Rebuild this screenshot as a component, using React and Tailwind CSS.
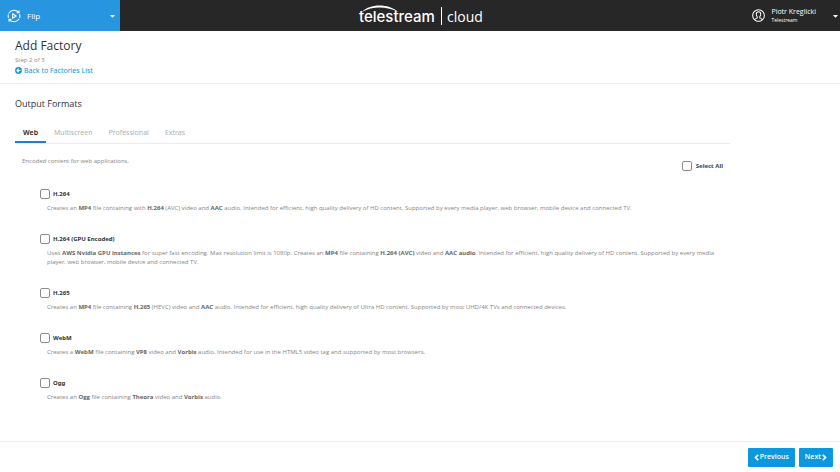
import { useState } from 'react';
import { FaCaretDown } from 'react-icons/fa';

const TABS = ['Web', 'Multiscreen', 'Professional', 'Extras'];

const FORMATS = [
  {
    id: 'h264',
    label: 'H.264',
    text: <>Creates an <b>MP4</b> file containing with <b>H.264</b> (AVC) video and <b>AAC</b> audio. Intended for efficient, high quality delivery of HD content. Supported by every media player, web browser, mobile device and connected TV.</>,
  },
  {
    id: 'h264-gpu',
    label: 'H.264 (GPU Encoded)',
    text: <>Uses <b>AWS Nvidia GPU instances</b> for super fast encoding. Max resolution limit is 1080p. Creates an <b>MP4</b> file containing <b>H.264 (AVC)</b> video and <b>AAC audio</b>. Intended for efficient, high quality delivery of HD content. Supported by every media player, web browser, mobile device and connected TV.</>,
  },
  {
    id: 'h265',
    label: 'H.265',
    text: <>Creates an <b>MP4</b> file containing <b>H.265</b> (HEVC) video and <b>AAC</b> audio. Intended for efficient, high quality delivery of Ultra HD content. Supported by most UHD/4K TVs and connected devices.</>,
  },
  {
    id: 'webm',
    label: 'WebM',
    text: <>Creates a <b>WebM</b> file containing <b>VP8</b> video and <b>Vorbis</b> audio. Intended for use in the HTML5 video tag and supported by most browsers.</>,
  },
  {
    id: 'ogg',
    label: 'Ogg',
    text: <>Creates an <b>Ogg</b> file containing <b>Theora</b> video and <b>Vorbis</b> audio.</>,
  },
];

const CHECKBOX = 'appearance-none w-[10px] h-[10px] shrink-0 rounded-[2px] border border-[#8c8c8c] bg-white checked:bg-[#1b95e0]';

function FlipIcon() {
  return (
    <svg viewBox="0 0 14 14" className="w-[14px] h-[14px]" fill="none" stroke="currentColor" strokeWidth="1.1" strokeLinecap="round" strokeLinejoin="round">
      <path d="M2 4A5.900 5.900 0 0 1 11.600 3.400M12.700 5.500A6 6 0 0 1 12.700 8.500M12 10A5.900 5.900 0 0 1 2.400 10.600M1.300 8.500A6 6 0 0 1 1.300 5.800" />
      <path d="M12 1.800v2h-2M2 12.200v-2h2" />
      <path d="M5.600 4.700v4.600L9.200 7z" />
    </svg>
  );
}

function UserIcon() {
  return (
    <svg viewBox="0 0 14 14" className="w-[13px] h-[13px]" fill="none" stroke="currentColor" strokeWidth="1.1" strokeLinecap="round">
      <circle cx="7" cy="7" r="6.3" />
      <path d="M3 11.4c.5-1.1 1.4-1.3 2.6-1.8V8.3C4.800 7.500 4.600 6.500 4.600 5.400 4.600 3.900 5.600 3 7 3s2.400.9 2.400 2.400c0 1.100-.2 2.100-1 2.900v1.300c1.200.5 2.100.7 2.600 1.800" />
    </svg>
  );
}

function BackIcon() {
  return (
    <svg viewBox="0 0 14 14" className="w-[7px] h-[7px]">
      <circle cx="7" cy="7" r="6.8" fill="currentColor" />
      <path d="M7.500 3.500 4 7l3.500 3.500M4.500 7H11" fill="none" stroke="white" strokeWidth="2.4" />
    </svg>
  );
}

function Chevron({ d }) {
  return (
    <svg viewBox="0 0 5 7" className="w-[5px] h-[7px]" fill="none" stroke="currentColor" strokeWidth="1.7">
      <path d={d} />
    </svg>
  );
}

function Logo() {
  return (
    <svg viewBox="0 0 126 26" className="w-[126px] h-[26px]" role="img" aria-label="telestream cloud" fill="white">
      <text x="2" y="19" fontSize="15" fontWeight="500" fontFamily="Inter, sans-serif">telestream</text>
      <path d="M5 9C12 1 31 0 41 9 31 3.500 16 2.500 5 9z" />
      <path d="M84 4h1v18h-1z" />
      <text x="90" y="19" fontSize="14" fontFamily="'Open Sans', sans-serif">cloud</text>
    </svg>
  );
}

export default function App() {
  const [activeTab, setActiveTab] = useState('Web');
  const [selected, setSelected] = useState([]);

  const toggle = (id) => {
    setSelected(selected.includes(id) ? selected.filter(s => s !== id) : [...selected, id]);
  };

  const toggleAll = () => {
    setSelected(selected.length === FORMATS.length ? [] : FORMATS.map(f => f.id));
  };

  return (
    <div className="min-h-screen flex flex-col bg-white font-['Open_Sans',sans-serif]">
      {/* Top bar */}
      <header className="h-[31px] grid grid-cols-[1fr_auto_1fr] items-center bg-[#272727] text-white">
        <button className="w-[120px] h-full flex items-center gap-[6px] pl-[7px] pr-[4px] bg-[#2795e0] text-[8px]">
          <FlipIcon />
          Flip
          <FaCaretDown className="ml-auto w-[7px] h-[8px]" />
        </button>
        <Logo />
        <button className="justify-self-end flex items-center gap-[6px] pr-px text-left">
          <UserIcon />
          <span className="block">
            <span className="block text-[7px] leading-[9px]">Piotr Kreglicki</span>
            <span className="block text-[5px] leading-[8px]">Telestream</span>
          </span>
          <FaCaretDown className="ml-[10px] w-[7px] h-[8px]" />
        </button>
      </header>

      {/* Page title */}
      <div className="h-[53px] px-[15px] pt-[6px] border-b border-[#ececec]">
        <h1 className="text-[12px] leading-[17px] text-[#2b3440]">Add Factory</h1>
        <p className="mt-px text-[6px] leading-[10px] text-[#8c8c8c]">Step 2 of 3</p>
        <a href="#factories" className="flex w-fit items-center gap-[2px] font-['Noto_Sans',sans-serif] text-[7px] leading-[11px] text-[#0c98dc]">
          <BackIcon />
          Back to Factories List
        </a>
      </div>

      {/* Formats */}
      <main className="flex-1 pl-[15px] pr-[110px] pt-[13px]">
        <h2 className="text-[9px] leading-[14px] text-[#2b3440]">Output Formats</h2>
        <div role="tablist" className="mt-[14px] flex border-b border-[#ececec] font-['Noto_Sans',sans-serif]">
          {TABS.map((tab) => (
            <button
              key={tab}
              role="tab"
              aria-selected={activeTab === tab}
              onClick={() => setActiveTab(tab)}
              className={`h-[18px] px-[8px] text-[7px] border-b-2 ${
                activeTab === tab ? 'font-semibold text-[#222] border-[#1583d2]' : 'text-[#b0b0b0] border-transparent'
              }`}
            >
              {tab}
            </button>
          ))}
        </div>

        <div className="mt-[12px] px-[7px] flex items-start justify-between">
          <p className="text-[6px] leading-[10px] text-[#858585]">Encoded content for web applications.</p>
          <label className="mt-[5px] flex items-center gap-[4px] font-['Noto_Sans',sans-serif] text-[6px] leading-[10px] font-bold text-[#444]">
            <input type="checkbox" className={CHECKBOX} checked={selected.length === FORMATS.length} onChange={toggleAll} />
            Select All
          </label>
        </div>

        <ul className="mt-[18px] pl-[25px] pr-[7px] space-y-[21px]">
          {FORMATS.map((format) => (
            <li key={format.id}>
              <label className="flex w-fit items-center gap-[3px] font-['Noto_Sans',sans-serif] text-[6px] leading-[10px] font-bold text-[#333]">
                <input type="checkbox" className={CHECKBOX} checked={selected.includes(format.id)} onChange={() => toggle(format.id)} />
                {format.label}
              </label>
              <p className="mt-[5px] pl-[7px] text-[6px] leading-[9px] text-[#858585] [&_b]:font-bold [&_b]:text-[#666]">{format.text}</p>
            </li>
          ))}
        </ul>
      </main>

      {/* Footer */}
      <footer className="h-[31px] flex items-start justify-end gap-[4px] pt-[6px] pr-[7px] border-t border-[#ececec]">
        <button className="h-[19px] px-[6px] flex items-center gap-px rounded-[1px] bg-[#0c98dc] text-[7px] font-semibold text-white">
          <Chevron d="M4.200 .8 1.500 3.500l2.700 2.700" />
          Previous
        </button>
        <button className="h-[19px] px-[6px] flex items-center gap-px rounded-[1px] bg-[#0c98dc] text-[7px] font-semibold text-white">
          Next
          <Chevron d="M.8 .8l2.700 2.700L.8 6.200" />
        </button>
      </footer>
    </div>
  );
}
